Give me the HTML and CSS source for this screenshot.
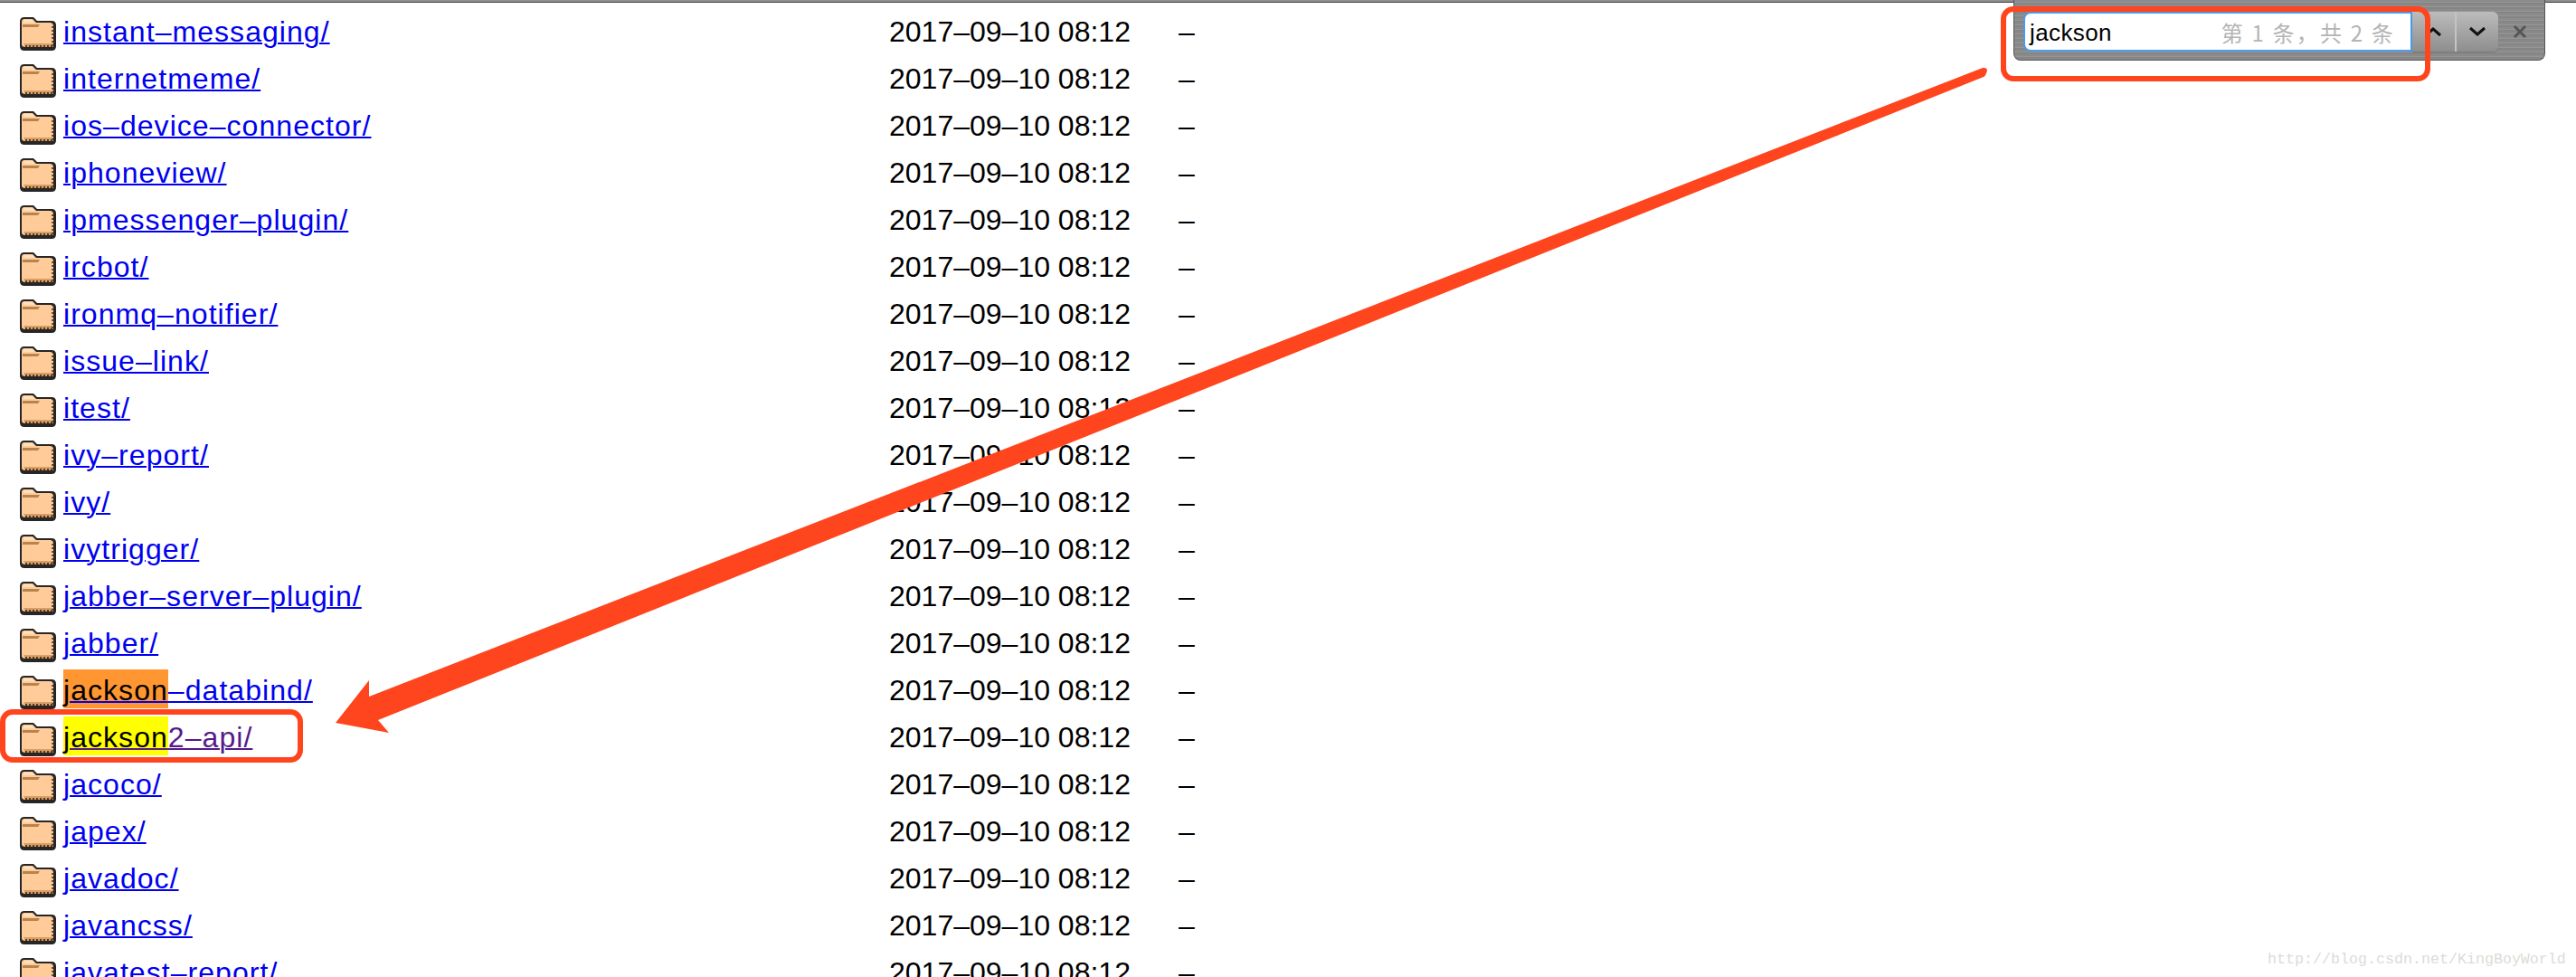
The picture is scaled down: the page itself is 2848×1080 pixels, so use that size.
FILE: index.html
```html
<!DOCTYPE html>
<html lang="en">
<head>
    <meta charset="UTF-8">
    <title>Index of /plugins</title>
    <link rel="stylesheet" href="styles.css">
</head>
<body>
    <svg class="defs" width="0" height="0">
        <symbol id="folder" viewBox="0 0 40 37">
            <path d="M5 0 H15 L19 4 H35 Q40 4 40 9 V32 Q40 37 35 37 H5 Q0 37 0 32 V5 Q0 0 5 0 Z" fill="#262626"/>
            <path d="M5 2 H14 L18 6 H33 Q37 6 37 10 V33 H6 Q2 33 2 30 V5 Q2 2 5 2 Z" fill="#ffcc99"/>
            <path d="M3 11 H20 L22 8 H3 Z" fill="#b8834f"/>
            <path d="M4 3 H14 L16 6 H4 Z" fill="#ffe0bd"/>
            <path d="M4 29 H37 V33 H6 Z" fill="#d99f68"/>
            <path d="M6 32 H37" stroke="#5e3a17" stroke-width="2" stroke-dasharray="2 2"/>
            <path d="M36 10 V32" stroke="#6e5030" stroke-width="2" stroke-dasharray="2 2"/>
        </symbol>
    </svg>

    <div class="top-rule"></div>

    <div class="listing">
        <div class="row"><svg class="icon"><use href="#folder"/></svg><span class="name"><a href="#">instant–messaging/</a></span><span>2017–09–10 08:12</span><span>–</span></div>
        <div class="row"><svg class="icon"><use href="#folder"/></svg><span class="name"><a href="#">internetmeme/</a></span><span>2017–09–10 08:12</span><span>–</span></div>
        <div class="row"><svg class="icon"><use href="#folder"/></svg><span class="name"><a href="#">ios–device–connector/</a></span><span>2017–09–10 08:12</span><span>–</span></div>
        <div class="row"><svg class="icon"><use href="#folder"/></svg><span class="name"><a href="#">iphoneview/</a></span><span>2017–09–10 08:12</span><span>–</span></div>
        <div class="row"><svg class="icon"><use href="#folder"/></svg><span class="name"><a href="#">ipmessenger–plugin/</a></span><span>2017–09–10 08:12</span><span>–</span></div>
        <div class="row"><svg class="icon"><use href="#folder"/></svg><span class="name"><a href="#">ircbot/</a></span><span>2017–09–10 08:12</span><span>–</span></div>
        <div class="row"><svg class="icon"><use href="#folder"/></svg><span class="name"><a href="#">ironmq–notifier/</a></span><span>2017–09–10 08:12</span><span>–</span></div>
        <div class="row"><svg class="icon"><use href="#folder"/></svg><span class="name"><a href="#">issue–link/</a></span><span>2017–09–10 08:12</span><span>–</span></div>
        <div class="row"><svg class="icon"><use href="#folder"/></svg><span class="name"><a href="#">itest/</a></span><span>2017–09–10 08:12</span><span>–</span></div>
        <div class="row"><svg class="icon"><use href="#folder"/></svg><span class="name"><a href="#">ivy–report/</a></span><span>2017–09–10 08:12</span><span>–</span></div>
        <div class="row"><svg class="icon"><use href="#folder"/></svg><span class="name"><a href="#">ivy/</a></span><span>2017–09–10 08:12</span><span>–</span></div>
        <div class="row"><svg class="icon"><use href="#folder"/></svg><span class="name"><a href="#">ivytrigger/</a></span><span>2017–09–10 08:12</span><span>–</span></div>
        <div class="row"><svg class="icon"><use href="#folder"/></svg><span class="name"><a href="#">jabber–server–plugin/</a></span><span>2017–09–10 08:12</span><span>–</span></div>
        <div class="row"><svg class="icon"><use href="#folder"/></svg><span class="name"><a href="#">jabber/</a></span><span>2017–09–10 08:12</span><span>–</span></div>
        <div class="row"><svg class="icon"><use href="#folder"/></svg><span class="name"><a href="#"><span class="hit-current">jackson</span>–databind/</a></span><span>2017–09–10 08:12</span><span>–</span></div>
        <div class="row"><svg class="icon"><use href="#folder"/></svg><span class="name"><a href="#" class="visited"><span class="hit">jackson</span>2–api/</a></span><span>2017–09–10 08:12</span><span>–</span></div>
        <div class="row"><svg class="icon"><use href="#folder"/></svg><span class="name"><a href="#">jacoco/</a></span><span>2017–09–10 08:12</span><span>–</span></div>
        <div class="row"><svg class="icon"><use href="#folder"/></svg><span class="name"><a href="#">japex/</a></span><span>2017–09–10 08:12</span><span>–</span></div>
        <div class="row"><svg class="icon"><use href="#folder"/></svg><span class="name"><a href="#">javadoc/</a></span><span>2017–09–10 08:12</span><span>–</span></div>
        <div class="row"><svg class="icon"><use href="#folder"/></svg><span class="name"><a href="#">javancss/</a></span><span>2017–09–10 08:12</span><span>–</span></div>
        <div class="row"><svg class="icon"><use href="#folder"/></svg><span class="name"><a href="#">javatest–report/</a></span><span>2017–09–10 08:12</span><span>–</span></div>
    </div>

    <div class="find-bar">
        <div class="find-input">
            <span class="find-text">jackson</span>
            <span class="find-count">第 1 条，共 2 条</span>
        </div>
        <div class="find-nav">
            <div class="find-btn"><svg width="20" height="12" viewBox="0 0 20 12"><path d="M2 10 L10 3 L18 10" fill="none" stroke="#111" stroke-width="3"/></svg></div>
            <div class="find-btn"><svg width="20" height="12" viewBox="0 0 20 12"><path d="M2 2 L10 9 L18 2" fill="none" stroke="#111" stroke-width="3"/></svg></div>
        </div>
        <svg class="find-close" width="16" height="16" viewBox="0 0 16 16"><path d="M2 2 L14 14 M14 2 L2 14" stroke="#555" stroke-width="3"/></svg>
    </div>

    <svg class="marks" width="2848" height="1080" viewBox="0 0 2848 1080">
        <rect x="2215" y="10" width="469" height="77" rx="11" fill="none" stroke="#ff451e" stroke-width="6"/>
        <rect x="3" y="787" width="329" height="53" rx="11" fill="none" stroke="#ff451e" stroke-width="6"/>
        <path d="M2192 75 Q2199 74 2196 81 Q2195 84 2193 85 L418 796 L430 810 L371 799 L408 752 L408 770 Z" fill="#ff451e"/>
    </svg>

    <div class="watermark">http://blog.csdn.net/KingBoyWorld</div>
</body>
</html>
```

FILE: styles.css
```css
html, body {
    margin: 0;
    height: 1080px;
    overflow: hidden;
    background: #fff;
}
body {
    position: relative;
    font-family: "Liberation Sans", Arial, sans-serif;
    font-size: 32px;
    color: #000;
}
.defs {
    display: block;
    height: 0;
}
.top-rule {
    height: 2px;
    background: #8e8e8e;
    border-bottom: 1px solid #444;
}
.listing {
    padding: 9px 0 0 22px;
}
.row {
    display: grid;
    grid-template-columns: 48px 913px 320px 40px;
    height: 52px;
    line-height: 47px;
}
.icon {
    width: 40px;
    height: 37px;
    margin-top: 7px;
}
.name a {
    color: #0000ee;
    letter-spacing: 1.05px;
    text-decoration-thickness: 2px;
}
.name a.visited {
    color: #551a8b;
}
.hit-current,
.hit {
    color: #000;
    padding: 5px 0 2px;
}
.hit-current {
    background: #ff9632;
}
.hit {
    background: #ffff00;
}

/* find bar sits over the page */
.find-bar {
    position: absolute;
    top: 0;
    left: 2226px;
    width: 588px;
    height: 67px;
    box-sizing: border-box;
    padding: 13px 0 0 10px;
    display: flex;
    align-items: flex-start;
    background: repeating-linear-gradient(180deg, #8b8b8b 0, #8b8b8b 2px, #959595 2px, #959595 3px, #858585 3px, #858585 5px);
    border: 1px solid #555;
    border-top: 0;
    border-radius: 0 0 8px 8px;
}
.find-input {
    width: 430px;
    height: 44px;
    box-sizing: border-box;
    background: #fff;
    border: 2px solid #4a9bec;
    border-radius: 8px 0 0 8px;
    padding: 0 17px 0 5px;
    display: flex;
    justify-content: space-between;
    align-items: center;
}
.find-text {
    font-size: 26px;
    letter-spacing: 0.4px;
    padding-top: 2px;
}
.find-count {
    font-family: "Noto Sans CJK SC", sans-serif;
    font-size: 24px;
    letter-spacing: 2.2px;
    color: #b4b4b4;
}
.find-nav {
    display: flex;
    width: 95px;
    height: 44px;
    border-radius: 0 6px 6px 0;
    overflow: hidden;
    background: linear-gradient(180deg, #bcbcbc, #8e8e8e);
    box-shadow: 0 1px 1px #777;
}
.find-btn {
    flex: 1;
    display: flex;
    align-items: center;
    justify-content: center;
}
.find-btn + .find-btn {
    border-left: 2px solid #c4c4c4;
}
.find-close {
    margin: 14px 0 0 16px;
}

.marks {
    position: absolute;
    top: 0;
    left: 0;
}
.watermark {
    position: absolute;
    top: 1051px;
    left: 2507px;
    font-family: "Liberation Mono", monospace;
    font-size: 16.67px;
    color: #dcdcd6;
}
```
